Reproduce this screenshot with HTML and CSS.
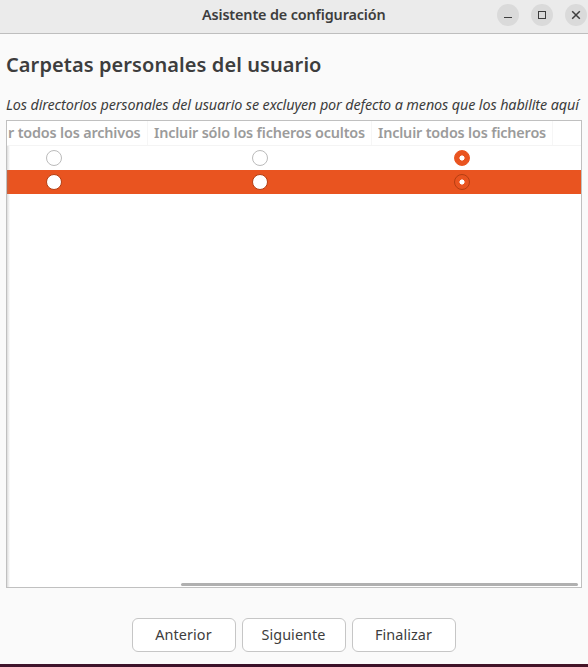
FILE: index.html
```html
<!DOCTYPE html>
<html lang="es">
<head>
<meta charset="utf-8">
<title>Asistente de configuración</title>
<link rel="stylesheet" href="styles.css">
</head>
<body>
<div class="window">
  <header class="titlebar">
    <span class="title">Asistente de configuración</span>
    <div class="controls">
      <span class="control"><svg viewBox="0 0 22 22"><path d="M7 13.5h8"/></svg></span>
      <span class="control"><svg viewBox="0 0 22 22"><rect x="7.5" y="7.5" width="7" height="7"/></svg></span>
      <span class="control"><svg viewBox="0 0 22 22"><path class="cross" d="M7.2 7.2l7.6 7.6M14.8 7.2l-7.6 7.6"/></svg></span>
    </div>
  </header>
  <main class="content">
    <h1 class="heading">Carpetas personales del usuario</h1>
    <p class="note">Los directorios personales del usuario se excluyen por defecto a menos que los habilite aquí</p>
    <section class="table">
      <div class="row head">
        <span class="cell first">r todos los archivos</span>
        <span class="cell">Incluir sólo los ficheros ocultos</span>
        <span class="cell">Incluir todos los ficheros</span>
        <span class="cell"></span>
      </div>
      <div class="body">
        <div class="row"><i class="radio"></i><i class="radio hidden-files"></i><i class="radio all-files on"></i></div>
        <div class="row selected"><i class="radio"></i><i class="radio hidden-files"></i><i class="radio all-files on"></i></div>
        <div class="scrollbar"></div>
      </div>
    </section>
    <footer class="actions">
      <button class="button">Anterior</button>
      <button class="button">Siguiente</button>
      <button class="button">Finalizar</button>
    </footer>
  </main>
  <div class="desktop"></div>
</div>
</body>
</html>
```
FILE: styles.css
```css
* { box-sizing: border-box; }
body { margin: 0; background: #fafafa; color: #3d3d3d; font: 14.4px/20px "Noto Sans", sans-serif; }
.window { display: flex; flex-direction: column; width: 588px; height: 667px; overflow: hidden; }
.titlebar { display: grid; grid-template-columns: 202px 1fr auto; height: 34px; flex: none; background: #ebebeb; border-bottom: 1px solid #bebebe; }
.title { grid-column: 2; padding-top: 5px; font-weight: 600; letter-spacing: -0.14px; white-space: nowrap; }
.controls { display: flex; gap: 12px; padding: 4px 1px 0 0; }
.control { width: 22px; height: 22px; border-radius: 50%; background: #dadada; }
.control svg { display: block; fill: none; stroke: #3d3d3d; }
.control .cross { stroke-width: 1.5; }
.content { flex: 1; display: flex; flex-direction: column; padding: 0 6px; }
.heading { margin: 16px 0 0; font-size: 20px; line-height: 30px; font-weight: 600; letter-spacing: 0.08px; white-space: nowrap; }
.note { margin: 15px 0 0; height: 25px; font-style: italic; letter-spacing: -0.125px; white-space: nowrap; }
.table { display: grid; grid-template-rows: 25px 1fr; height: 468px; background: #fff; border: 1px solid #c0c0c0; overflow: hidden; }
.row { display: grid; grid-template-columns: 141px 224px 181px 1fr; height: 24px; align-items: center; }
.row.head { height: 25px; border-bottom: 1px solid #f4f4f4; color: #9b9b9b; font-weight: 600; letter-spacing: -0.17px; }
.body { display: flex; flex-direction: column; background: linear-gradient(90deg, #dcdcdc, #fff 3px); }
.cell { height: 24px; padding: 2px 0 0 6px; border-right: 1px solid #f6f6f6; white-space: nowrap; }
.cell.first { padding-left: 1px; }
.cell:last-child { border: 0; }
.radio { width: 16px; height: 16px; border: 1px solid #bbb; border-radius: 50%; background: #fff; margin-left: 39px; }
.radio.hidden-files { margin-left: 104px; }
.radio.all-files { margin-left: 82px; }
.radio.on { border-color: #e95420; background: radial-gradient(circle, #fff 2.2px, #e95420 2.9px); }
.selected { background: linear-gradient(90deg, #c66442, #e95420 3px); }
.selected .radio { border-color: #b53e12; }
.scrollbar { width: 397px; height: 3px; margin: auto 0 1px 174px; border-radius: 2px; background: #b0b0b0; }
.actions { display: flex; justify-content: center; gap: 6px; margin-top: 30px; }
.button { width: 104px; height: 34px; padding: 0 1px 0 0; border: 1px solid #c6c6c6; border-radius: 6px; background: #fff; color: #3d3d3d; font: inherit; letter-spacing: 0.08px; }
.desktop { height: 3px; background: linear-gradient(90deg, #40152c, #3a1028 50%, #451528); flex: none; }
```
